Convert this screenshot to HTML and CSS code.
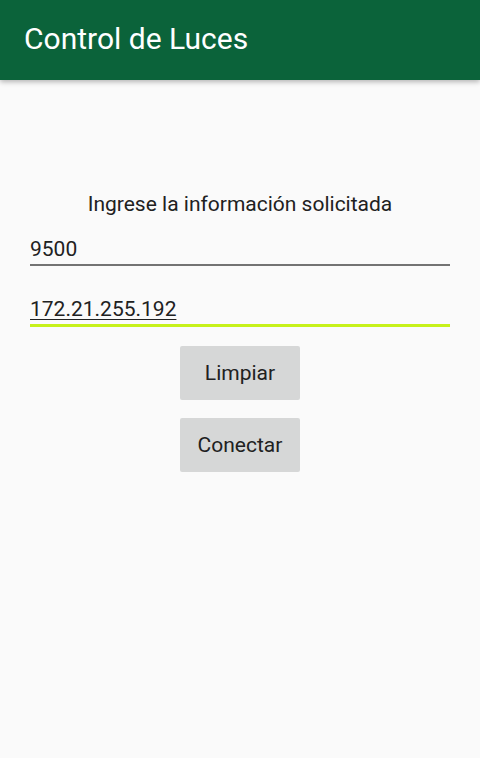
FILE: index.html
```html
<!DOCTYPE html>
<html lang="es">
<head>
<meta charset="utf-8">
<link rel="stylesheet" href="styles.css">
</head>
<body>
<header class="appbar"><h1 class="title">Control de Luces</h1></header>
<main class="content">
  <p class="label">Ingrese la información solicitada</p>
  <div class="field"><span class="value">9500</span></div>
  <div class="field field-active"><span class="value value-underlined">172.21.255.192</span></div>
  <div class="buttons">
    <button class="btn">Limpiar</button>
    <button class="btn">Conectar</button>
  </div>
</main>
</body>
</html>
```
FILE: styles.css
```css
html, body { margin: 0; padding: 0; }
body {
  width: 480px;
  height: 758px;
  background: #fafafa;
  font-family: Roboto, "Noto Sans", sans-serif;
  color: #212121;
  overflow: hidden;
}
.appbar {
  height: 80px;
  background: #0b633a;
  display: flex;
  align-items: center;
  padding-left: 24px;
  box-shadow: 0 2px 5px rgba(0,0,0,0.28);
  position: relative;
}
.title {
  margin: 0;
  font-weight: 400;
  font-size: 30px;
  color: #ffffff;
  line-height: 1;
  padding-bottom: 3px;
}
.content {
  padding: 0 30px;
  display: flex;
  flex-direction: column;
}
.label {
  margin: 112px 0 0;
  text-align: center;
  font-size: 21px;
  line-height: 24px;
  color: #212121;
}
.field {
  margin-top: 18px;
  height: 30px;
  border-bottom: 2px solid #737373;
  display: flex;
  align-items: flex-end;
  font-size: 21px;
}
.field-active {
  margin-top: 28px;
  border-bottom: 3px solid #c6f11a;
}
.value { line-height: 24px; padding-bottom: 3px; }
.value-underlined { text-decoration: underline; text-underline-offset: 3px; text-decoration-thickness: 1px; }
.buttons {
  margin-top: 19px;
  display: flex;
  flex-direction: column;
  align-items: center;
  gap: 18px;
}
.btn {
  width: 120px;
  height: 54px;
  border: none;
  border-radius: 2px;
  background: #d6d7d7;
  font-family: Roboto, "Noto Sans", sans-serif;
  font-size: 21px;
  color: #212121;
  padding: 0;
}
```
